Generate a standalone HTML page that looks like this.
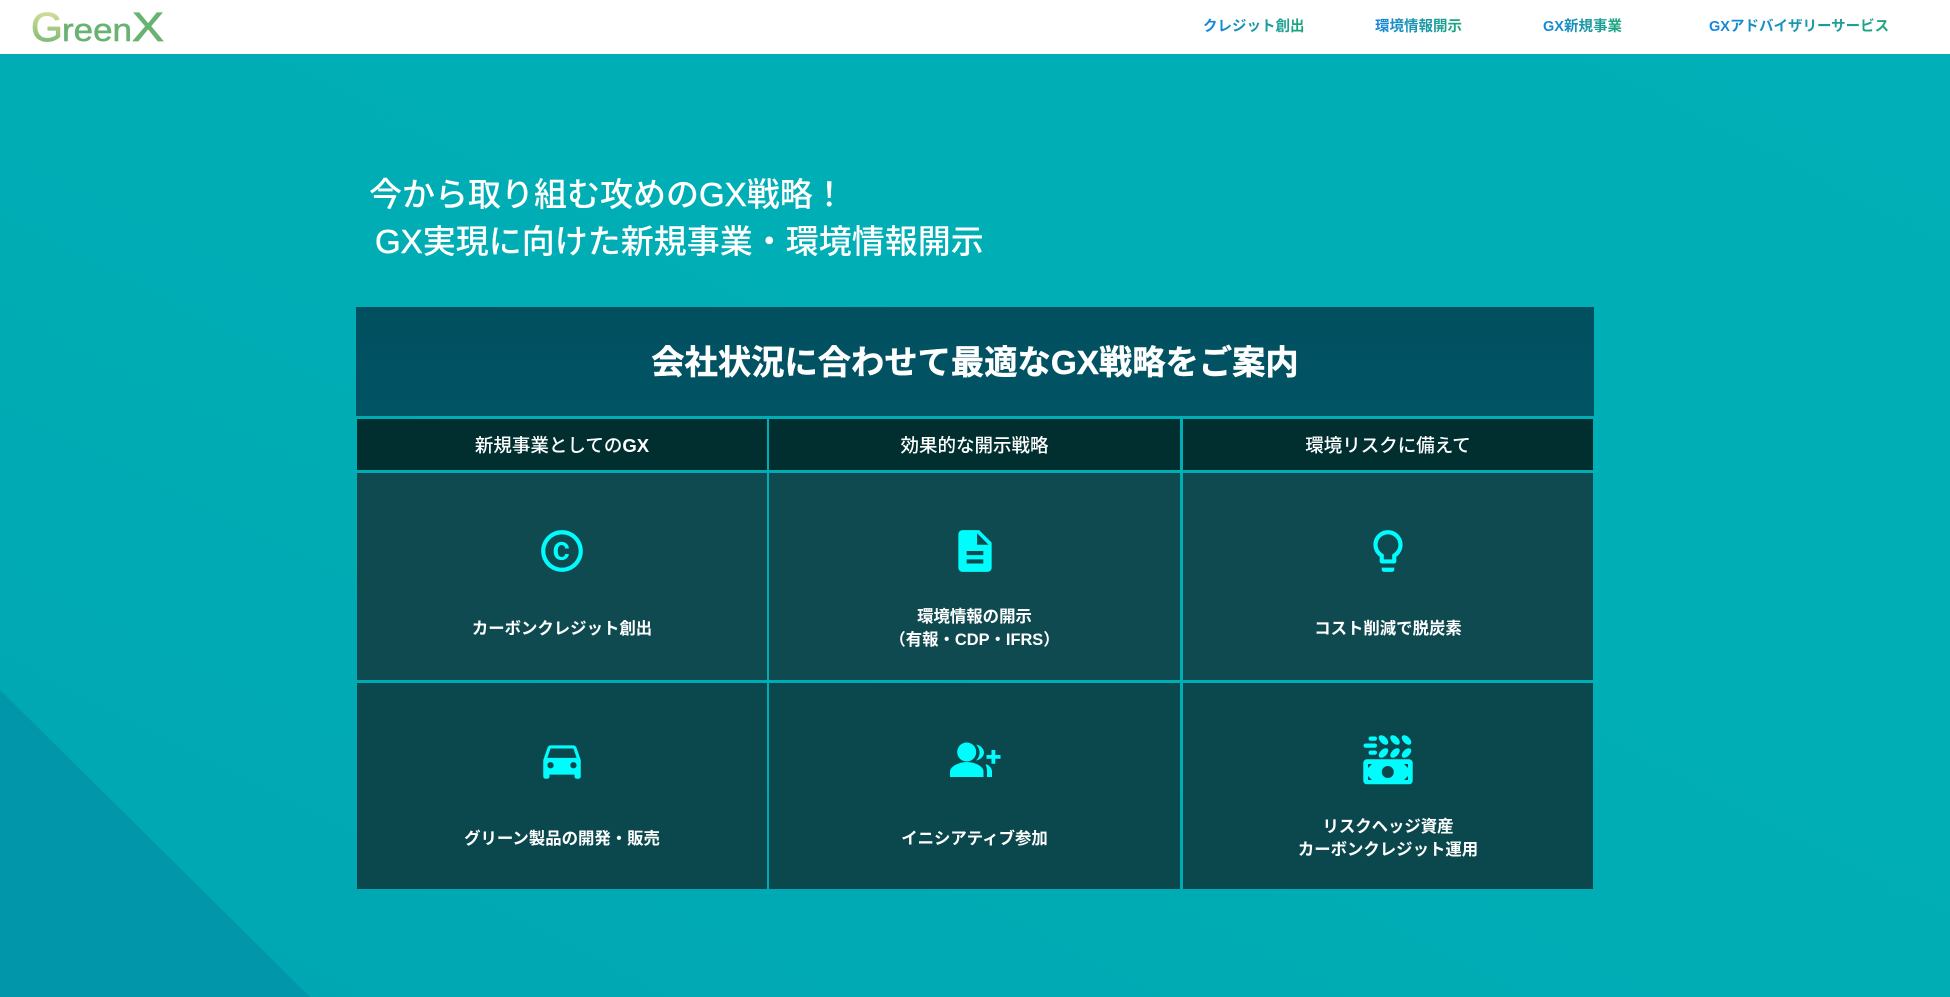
<!DOCTYPE html>
<html lang="ja">
<head>
<meta charset="utf-8">
<title>GreenX</title>
<style>
html,body{margin:0;padding:0}
body{width:1950px;height:997px;overflow:hidden;position:relative;font-family:"Liberation Sans","Noto Sans CJK JP",sans-serif;background:#00aeb6}
.bg{position:absolute;left:0;top:0;width:1950px;height:997px}
.top{position:absolute;left:0;top:0;width:1950px;height:54px;background:#fff}
.nav{position:absolute;top:16px;height:22px;line-height:22px;font-size:14.5px;font-weight:700;white-space:nowrap;background:linear-gradient(90deg,#1585dd,#1fa77c);-webkit-background-clip:text;background-clip:text;color:transparent}
.h{position:absolute;color:#fff;white-space:nowrap;font-weight:500;font-size:33px;line-height:40px}
.h span{-webkit-text-stroke:.5px #fff}
.box{position:absolute;background:#0e4a50}
.t{position:absolute;text-align:center;color:#fff;white-space:nowrap}
.head{background:#012f30;font-size:18.5px;font-weight:500;line-height:53px}
.head b{font-weight:700}
.lab{font-size:16.4px;font-weight:700;line-height:23px}
svg.i{position:absolute;width:50px;height:50px;fill:#00fdfd}
svg.p{position:absolute;width:90px;height:70px;fill:#00fdfd}
</style>
</head>
<body>
<svg class="bg" viewBox="0 0 1950 997">
<defs>
<linearGradient id="bgl" x1="1" y1="0" x2="0" y2="1">
<stop offset="0" stop-color="#00afb7"/><stop offset="0.55" stop-color="#00adb5"/><stop offset="1" stop-color="#00a6b2"/>
</linearGradient>
</defs>
<rect width="1950" height="997" fill="url(#bgl)"/>
<polygon points="0,690 0,997 310,997" fill="#0196a9"/>
</svg>

<div class="top"></div>
<svg style="position:absolute;left:0;top:0" width="200" height="54" viewBox="0 0 200 54">
<defs><linearGradient id="lg" x1="0" y1="0" x2="0" y2="1"><stop offset="0" stop-color="#e6e8b0"/><stop offset="0.5" stop-color="#a9cc84"/><stop offset="1" stop-color="#6ab272"/></linearGradient></defs>
<text x="31" y="41" font-family="Liberation Sans" font-size="41" fill="url(#lg)" stroke="url(#lg)" stroke-width=".8">G</text>
<text x="62" y="41" font-family="Liberation Sans" font-size="32" fill="#69b272" stroke="#69b272" stroke-width=".5" textLength="70" lengthAdjust="spacingAndGlyphs">reen</text>
<text x="132" y="41" font-family="Liberation Sans" font-size="41" fill="#69b272" stroke="#69b272" stroke-width=".8" textLength="32" lengthAdjust="spacingAndGlyphs">X</text>
</svg>

<div class="nav" style="left:1203px">クレジット創出</div>
<div class="nav" style="left:1375px">環境情報開示</div>
<div class="nav" style="left:1543px">GX新規事業</div>
<div class="nav" style="left:1709px">GXアドバイザリーサービス</div>

<div class="h" style="left:369px;top:175px">今から取り組む攻めの<span>GX</span>戦略！</div>
<div class="h" style="left:375px;top:222px"><span>GX</span>実現に向けた新規事業・環境情報開示</div>

<div class="box" style="left:356px;top:307px;width:1238px;height:109px;background:linear-gradient(180deg,#014f5f,#015465)"></div>
<div class="t" style="left:356px;top:340px;width:1238px;font-size:33.3px;font-weight:700;line-height:48px;-webkit-text-stroke:.4px #fff">会社状況に合わせて最適なGX戦略をご案内</div>

<div class="box t head" style="left:357px;top:419px;width:410px;height:51px">新規事業としての<b>GX</b></div>
<div class="box t head" style="left:769px;top:419px;width:411px;height:51px">効果的な開示戦略</div>
<div class="box t head" style="left:1183px;top:419px;width:410px;height:51px">環境リスクに備えて</div>

<div class="box" style="left:357px;top:473px;width:410px;height:207px"></div>
<div class="box" style="left:769px;top:473px;width:411px;height:207px"></div>
<div class="box" style="left:1183px;top:473px;width:410px;height:207px"></div>
<div class="box" style="left:357px;top:683px;width:410px;height:206px;background:#0b484d"></div>
<div class="box" style="left:769px;top:683px;width:411px;height:206px;background:#0b484d"></div>
<div class="box" style="left:1183px;top:683px;width:410px;height:206px;background:#0b484d"></div>

<svg class="i" style="left:537px;top:526px" viewBox="0 0 24 24"><path d="M10.08 10.86c.05-.33.16-.62.3-.87s.34-.46.59-.62c.24-.15.54-.22.91-.23.23.01.44.05.63.13.2.09.38.21.52.36s.25.33.34.53.13.42.14.64h1.79c-.02-.47-.11-.9-.28-1.29s-.4-.73-.7-1.01-.66-.5-1.08-.66-.88-.23-1.39-.23c-.65 0-1.22.11-1.7.34s-.88.53-1.2.92-.56.84-.71 1.36S8 11.29 8 11.87v.27c0 .58.08 1.12.23 1.64s.39.97.71 1.35.72.69 1.2.91c.48.22 1.05.34 1.7.34.47 0 .91-.08 1.32-.23s.77-.36 1.08-.63.56-.58.74-.94.29-.74.3-1.15h-1.79c-.01.21-.06.4-.15.58s-.21.33-.36.46-.32.23-.52.3c-.19.07-.39.09-.6.1-.36-.01-.66-.08-.89-.23-.25-.16-.45-.37-.59-.62s-.25-.55-.3-.88-.08-.67-.08-1v-.27c0-.35.03-.68.08-1.01zM12 2C6.48 2 2 6.48 2 12s4.48 10 10 10 10-4.48 10-10S17.52 2 12 2zm0 18c-4.41 0-8-3.59-8-8s3.59-8 8-8 8 3.59 8 8-3.59 8-8 8z"/></svg>
<svg class="i" style="left:950px;top:526px" viewBox="0 0 24 24"><path d="M14 2H6c-1.1 0-1.99.9-1.99 2L4 20c0 1.1.89 2 1.99 2H18c1.1 0 2-.9 2-2V8l-6-6zm2 16H8v-2h8v2zm0-4H8v-2h8v2zm-3-5V3.5L18.5 9H13z"/></svg>
<svg class="i" style="left:1363px;top:526px" viewBox="0 0 24 24"><path d="M9 21c0 .55.45 1 1 1h4c.55 0 1-.45 1-1v-1H9v1zm3-19C8.14 2 5 5.14 5 9c0 2.38 1.19 4.47 3 5.74V17c0 .55.45 1 1 1h6c.55 0 1-.45 1-1v-2.26c1.81-1.27 3-3.36 3-5.74 0-3.86-3.14-7-7-7zm2.85 11.1l-.85.6V16h-4v-2.3l-.85-.6C7.8 12.16 7 10.63 7 9c0-2.76 2.24-5 5-5s5 2.24 5 5c0 1.63-.8 3.16-2.15 4.1z"/></svg>
<svg class="i" style="left:537px;top:735px" viewBox="0 0 24 24"><path d="M18.92 6.01C18.72 5.42 18.16 5 17.5 5h-11c-.66 0-1.21.42-1.42 1.01L3 12v8c0 .55.45 1 1 1h1c.55 0 1-.45 1-1v-1h12v1c0 .55.45 1 1 1h1c.55 0 1-.45 1-1v-8l-2.08-5.99zM6.5 16c-.83 0-1.5-.67-1.5-1.5S5.67 13 6.5 13s1.5.67 1.5 1.5S7.33 16 6.5 16zm11 0c-.83 0-1.5-.67-1.5-1.5s.67-1.5 1.5-1.5 1.5.67 1.5 1.5-.67 1.5-1.5 1.5zM5 11l1.5-4.500h11L19 11H5z"/></svg>

<svg class="p" style="left:930px;top:725px" viewBox="0 0 90 70">
<circle cx="36.7" cy="27" r="9.5"/>
<path d="M20 52v-5.5c0-5 9-9.500 17-9.500s16.500 4.500 16.500 9.500V52z"/>
<path d="M46 19.500c5 1 8 4.500 8 8s-3 7-8 8c2.500-2.500 3.500-5 3.500-8s-1-5.500-3.500-8z"/>
<path d="M57 39.500c3 1.500 5 4 5 7V52h-5v-5.500c0-2.500-.500-5-1.500-7z"/>
<path d="M61.500 25h3.800v5h5.200v3.800h-5.200v5h-3.800v-5h-5v-3.800h5z"/>
</svg>

<svg class="p" style="left:1350px;top:725px" viewBox="0 0 90 70">
<rect x="13.300" y="34.300" width="49.400" height="25" rx="3.500"/>
<g fill="#0b484d">
<circle cx="37.800" cy="47" r="6"/>
<path d="M18 39h4l-4 4zM58 39v4l-4-4zM18 55v-4l4 4zM58 55h-4l4-4z"/>
</g>
<rect x="18.500" y="11.500" width="8.500" height="4.200" rx="2.100"/>
<rect x="13.500" y="18.500" width="13.500" height="4.200" rx="2.100"/>
<rect x="18.500" y="25.500" width="8.500" height="4.200" rx="2.100"/>
<ellipse cx="33.500" cy="15" rx="5.800" ry="3.400" transform="rotate(45 33.500 15)"/>
<ellipse cx="45" cy="15" rx="5.800" ry="3.400" transform="rotate(45 45 15)"/>
<ellipse cx="56.500" cy="15" rx="5.800" ry="3.400" transform="rotate(45 56.500 15)"/>
<ellipse cx="33.500" cy="28" rx="5.800" ry="3.400" transform="rotate(-45 33.500 28)"/>
<ellipse cx="45" cy="28" rx="5.800" ry="3.400" transform="rotate(-45 45 28)"/>
<ellipse cx="56.500" cy="28" rx="5.800" ry="3.400" transform="rotate(-45 56.500 28)"/>
</svg>

<div class="t lab" style="left:357px;top:618px;width:410px">カーボンクレジット創出</div>
<div class="t lab" style="left:769px;top:606px;width:411px">環境情報の開示<br>（有報・CDP・IFRS）</div>
<div class="t lab" style="left:1183px;top:618px;width:410px">コスト削減で脱炭素</div>
<div class="t lab" style="left:357px;top:828px;width:410px">グリーン製品の開発・販売</div>
<div class="t lab" style="left:769px;top:828px;width:411px">イニシアティブ参加</div>
<div class="t lab" style="left:1183px;top:816px;width:410px">リスクヘッジ資産<br>カーボンクレジット運用</div>
</body>
</html>
